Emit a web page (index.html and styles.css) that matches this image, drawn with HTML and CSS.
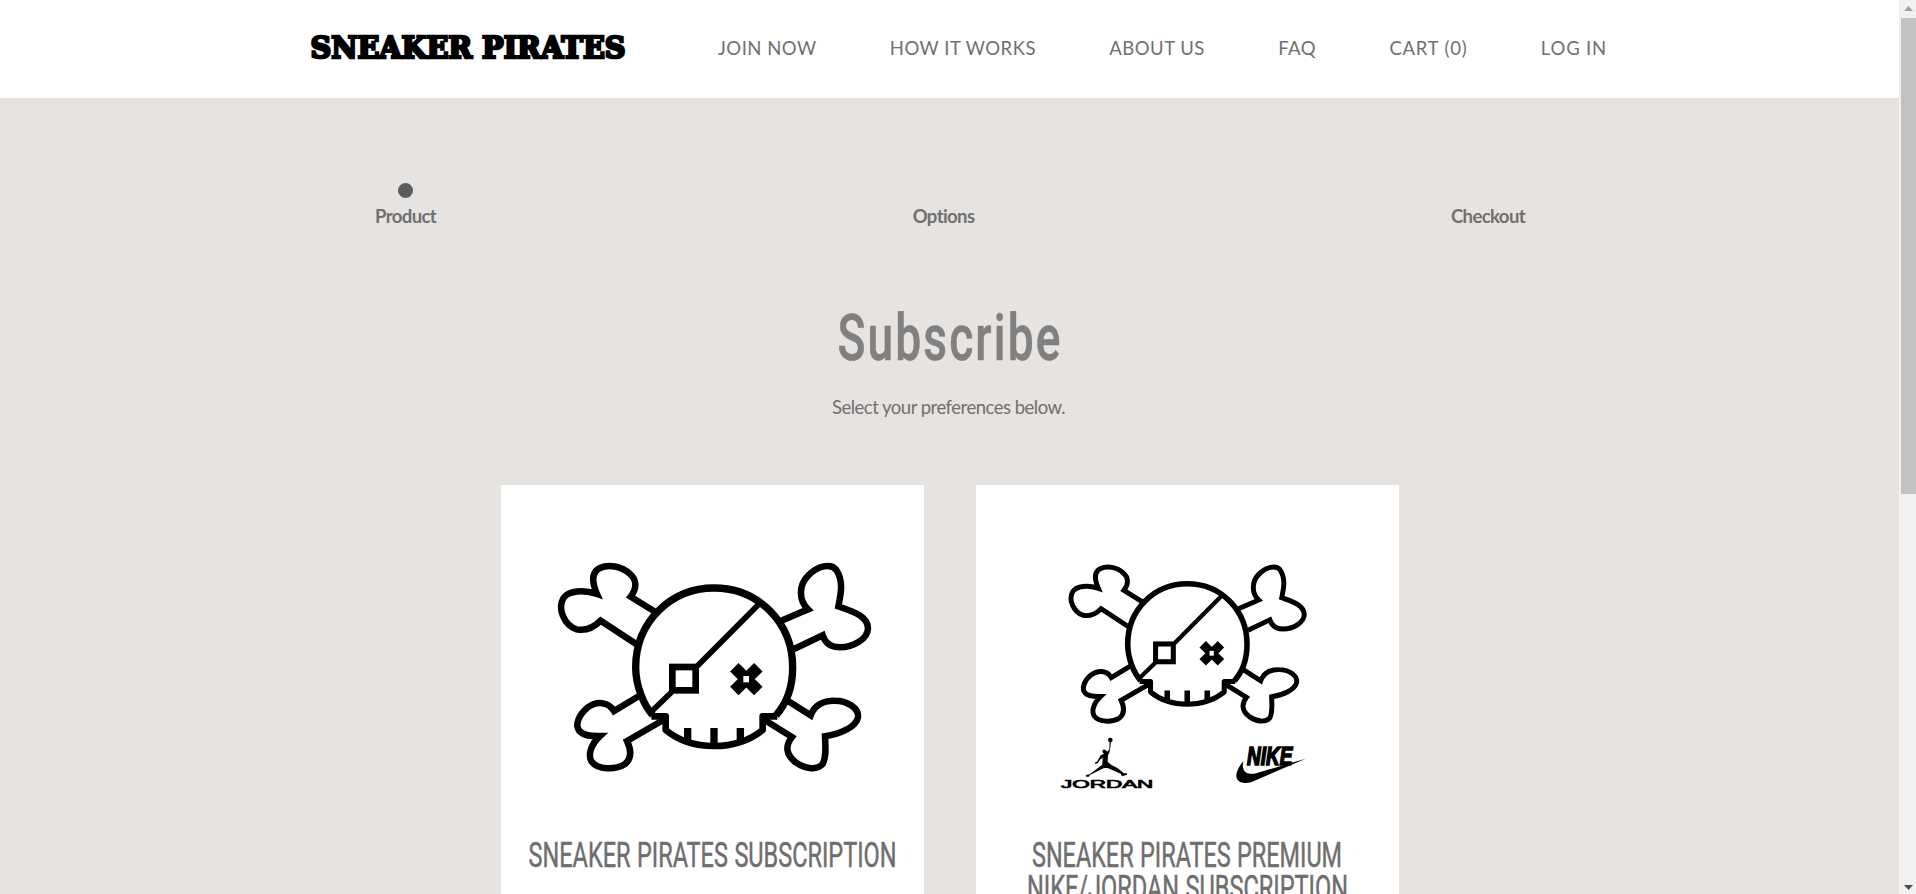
FILE: index.html
```html
<!DOCTYPE html>
<html lang="en">
<head>
<meta charset="utf-8">
<title>Sneaker Pirates</title>
<link rel="stylesheet" href="styles.css">
</head>
<body>
<div class="page">
  <header class="header">
    <svg class="logo" width="318" height="30" viewBox="0 0 318 30">
      <text x="1.500" y="25.500" textLength="315" lengthAdjust="spacingAndGlyphs" class="logo-text">SNEAKER PIRATES</text>
    </svg>
    <nav class="nav">
      <a>JOIN NOW</a><a>HOW IT WORKS</a><a>ABOUT US</a><a>FAQ</a><a class="loose">CART (0)</a><a class="loose">LOG IN</a>
    </nav>
  </header>
  <main class="main">
    <div class="steps">
      <div class="step active"><i class="dot"></i><span>Product</span></div>
      <div class="line"></div>
      <div class="step"><i class="dot"></i><span>Options</span></div>
      <div class="line"></div>
      <div class="step"><i class="dot"></i><span>Checkout</span></div>
    </div>
    <h1 class="title">
      <svg width="224" height="60" viewBox="0 0 224 60"><text x="-0.500" y="53" textLength="225" lengthAdjust="spacingAndGlyphs" class="title-text">Subscribe</text></svg>
    </h1>
    <p class="lead">Select your preferences below.</p>
    <div class="cards">
      <article class="card">
        <svg class="art" width="350" height="260" viewBox="0 0 1050 780">
          <defs>
            <g id="skull" fill="none" stroke="#000" stroke-width="19.500" stroke-linejoin="miter">
              <path d="M345 215L272 170C292 145 290 118 270 102C245 78 205 72 180 84C150 98 158 132 171 162C130 148 85 152 70 175C52 205 72 255 110 268C140 274 162 262 182 242L293 315"/>
              <path d="M722 243L804 208C775 180 776 135 805 106C833 78 873 68 889 90C912 125 902 165 895 199C940 215 983 228 984 265C983 297 940 322 900 322C870 322 855 308 848 286L762 327"/>
              <path d="M297 468L222 513C204 484 170 483 142 503C116 525 103 556 119 574C134 590 160 588 180 588C154 612 142 645 155 665C173 690 227 690 254 673C276 655 275 632 261 603L370 540"/>
              <path d="M743 482L812 526C823 496 850 481 885 482C920 482 958 504 954 532C948 562 900 582 855 589C856 620 860 650 848 672C832 691 797 688 767 667C740 646 733 620 756 591L675 541"/>
              <path stroke-width="22" d="M338 525C310 495 287 435 287 382C287 243 395 144 522 144C655 144 758 248 758 382C758 440 740 490 708 526"/>
              <path stroke-width="20" stroke-linejoin="round" d="M334 529H377V570C420 606 465 618 522 618C580 618 627 603 668 570V529H712"/>
              <path stroke-width="22" d="M443 564V604M522 564V620M601 564V604"/>
              <path stroke-width="17" d="M657 192L472 378M396 455L332 517"/>
              <rect stroke-width="20" x="397" y="381" width="70" height="70"/>
              <path stroke-width="36" d="M583 382L655 453M655 382L583 453"/>
              <rect x="610" y="408" width="17" height="19" fill="#fff" stroke="none"/>
            </g>
          </defs>
          <use href="#skull"/>
        </svg>
        <svg class="heading" width="368" height="34" viewBox="0 0 368 34">
          <text class="card-text" x="-0.500" y="31" textLength="368" lengthAdjust="spacingAndGlyphs">SNEAKER PIRATES SUBSCRIPTION</text>
        </svg>
      </article>
      <article class="card">
        <svg class="art wide" width="350" height="260" viewBox="0 0 1050 780">
          <use href="#skull" transform="translate(126 21.6) scale(.76 .762)"/>
          <g transform="translate(81 0)">
            <circle cx="211" cy="600" r="7"/>
            <path d="M209 604L213 607L209 635L204 646L203 665L213 674L232 684L252 700L261 700L261 704L246 709L242 701L203 684L192 684L151 704L145 711L136 709L140 704L149 703L187 674L188 654L181 658L173 670L165 672L166 667L171 665L182 646L192 641C184 636 187 627 194 629C200 631 199 635 204 634L208 627Z"/>
            <text x="63" y="744" textLength="277" lengthAdjust="spacingAndGlyphs" class="jordan">JORDAN</text>
            <text x="621" y="675" textLength="136" lengthAdjust="spacingAndGlyphs" class="nike">NIKE</text>
            <path d="M610 663C578 704 585 727 614 729C626 730 636 726 649 720L797 656L651 699C620 708 603 693 610 663Z"/>
          </g>
        </svg>
        <svg class="heading" width="322" height="70" viewBox="0 0 322 70">
          <text class="card-text" x="5" y="31" textLength="310" lengthAdjust="spacingAndGlyphs">SNEAKER PIRATES PREMIUM</text>
          <text class="card-text" x="0" y="64" textLength="321" lengthAdjust="spacingAndGlyphs">NIKE/JORDAN SUBSCRIPTION</text>
        </svg>
      </article>
    </div>
  </main>
</div>
<aside class="scrollbar">
  <svg width="9" height="5" viewBox="0 0 9 5"><path d="M0 5L4.500 0L9 5Z" fill="#a3a3a3"/></svg>
  <div class="thumb"></div>
  <svg width="9" height="5" viewBox="0 0 9 5"><path d="M0 0L4.500 5L9 0Z" fill="#505050"/></svg>
</aside>
</body>
</html>
```
FILE: styles.css
```css
* { box-sizing: border-box; }
svg { overflow: visible; }
body {
  margin: 0;
  height: 894px;
  display: flex;
  overflow: hidden;
  background: #e7e3e0;
  color: #707070;
  font-family: Lato, sans-serif;
  font-size: 18.5px;
}
.page { width: 1899px; flex: none; }
.header {
  height: 98px;
  background: #fff;
  display: flex;
  align-items: flex-start;
  padding: 32px 0 0 309px;
}
.logo { flex: none; }
.logo-text {
  font: bold 29px "DejaVu Serif", serif;
  fill: #000;
  stroke: #000;
  stroke-width: 2.6px;
}
.nav {
  display: flex;
  gap: 73.3px;
  margin-left: 91px;
  padding-top: 5px;
  line-height: 22px;
  letter-spacing: 0.5px;
  white-space: nowrap;
}
.loose { letter-spacing: 0.8px; }
.main { height: 796px; overflow: hidden; padding-top: 80px; }
.steps {
  display: flex;
  width: 1150px;
  margin-left: 375px;
}
.step {
  flex: none;
  display: flex;
  flex-direction: column;
  align-items: center;
  font-weight: 700;
  letter-spacing: -0.6px;
  line-height: 26px;
  height: 51px;
}
.dot {
  flex: none;
  width: 25px;
  height: 25px;
  border: 5px solid #e4e4e4;
  border-radius: 50%;
}
.active .dot { background: #5c5c5c; }
.line {
  flex: 1;
  height: 3px;
  margin: 10px -26px 0 -19px;
  background: #e4e4e4;
}
.title { margin: 78px 0 0 838px; height: 60px; line-height: 0; }
.title-text {
  font: 500 65px Roboto, sans-serif;
  letter-spacing: 3px;
  fill: #808080;
  stroke: #808080;
  stroke-width: 0.6px;
}
.lead {
  margin: 29px 2px 0 0;
  line-height: 22px;
  text-align: center;
  letter-spacing: -0.5px;
}
.cards { display: flex; gap: 52px; margin: 67px 0 0 501px; }
.card {
  width: 423px;
  height: 440px;
  flex: none;
  background: #fff;
  display: flex;
  flex-direction: column;
  align-items: center;
  padding-top: 55px;
}
.art { margin-left: 5px; flex: none; }
.art.wide { margin-left: 0; }
.heading { margin-top: 36px; flex: none; }
.card-text {
  font: 34.5px Roboto, sans-serif;
  word-spacing: 1px;
  fill: #6e6e6e;
  stroke: #6e6e6e;
  stroke-width: 0.5px;
}
.jordan { font: 31px "Liberation Sans", sans-serif; stroke: #000; stroke-width: 2px; }
.nike { font: italic bold 76px "Liberation Sans", sans-serif; stroke: #000; stroke-width: 5px; }
.scrollbar {
  width: 17px;
  flex: none;
  background: #f1f1f1;
  display: flex;
  flex-direction: column;
  align-items: center;
  justify-content: space-between;
  padding: 6px 0 4px 2px;
}
.thumb { width: 15px; height: 476px; margin: 7px 0 auto; background: #c1c1c1; }
```
